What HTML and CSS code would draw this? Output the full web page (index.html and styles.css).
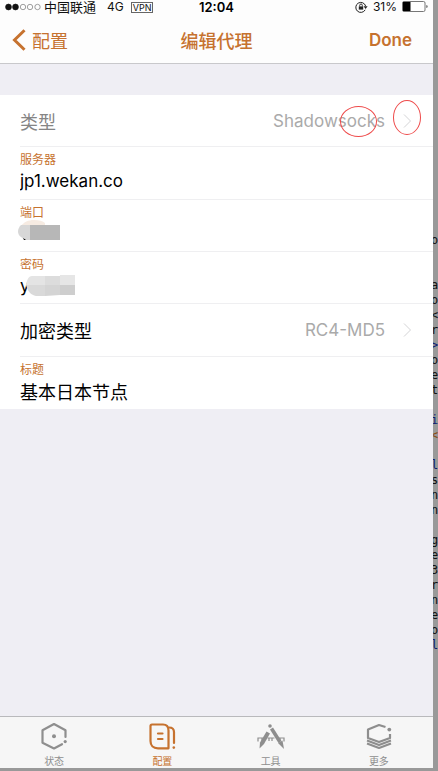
FILE: index.html
```
<!DOCTYPE html>
<html lang="zh-CN">
<head>
<meta charset="utf-8">
<meta name="viewport" content="width=device-width, initial-scale=1">
<title>编辑代理</title>
<link rel="stylesheet" href="styles.css">
</head>
<body>
<main class="phone">
  <div class="status">
    <div class="status-left">
      <svg class="signal" width="36" height="8" viewBox="0 0 36 8"><g stroke="#111" stroke-width=".7"><circle cx="3.5" cy="4" r="2.9" fill="#111"/><circle cx="10.5" cy="4" r="2.9" fill="#111"/><g fill="none" stroke="#777"><circle cx="18" cy="4" r="2.7"/><circle cx="25" cy="4" r="2.7"/><circle cx="32.5" cy="4" r="2.7"/></g></g></svg>
      <span>中国联通</span>
      <span class="network">4G</span>
      <span class="vpn">VPN</span>
    </div>
    <strong class="time">12:04</strong>
    <div class="status-right">
      <svg width="13" height="12" viewBox="0 0 13 12" fill="none" stroke="#222"><path d="M10.2 8.800A5 5 0 1 1 10.600 5"/><path d="M8.600 5.200h4L10.600 8z" fill="#222" stroke="none"/><path d="M3.800 5.400h4.400v3.200H3.800z" fill="#222" stroke="none"/><path d="M4.700 5.500V4.300a1.300 1.300 0 0 1 2.600 0v1.200" stroke-width=".9"/></svg>
      <span>31%</span>
      <svg width="26" height="12" viewBox="0 0 26 12"><rect x=".5" y=".5" width="22.500" height="10" rx="1.500" fill="#fff" stroke="#777"/><path d="M1 1h7.500v9H1z"/><path d="M24.500 4c1.300.5 1.300 2.500 0 3z" fill="#222"/></svg>
    </div>
  </div>

  <header class="nav">
    <a class="back" href="#list"><svg width="14" height="22" viewBox="0 0 14 22" fill="none" stroke="currentColor" stroke-width="3"><path d="M12.500 1.200 2.500 11l10 9.800"/></svg>配置</a>
    <h1>编辑代理</h1>
    <button class="done" type="submit" form="proxy">Done</button>
  </header>

  <form class="list" id="proxy">
    <button class="row pick muted" type="button">
      <span>类型</span>
      <span class="value">Shadowsocks</span>
      <svg class="chevron" width="9" height="16" viewBox="0 0 9 16"><path d="m1 1.500 6.500 6.500L1 14.500"/></svg>
      <i class="ring ring-text"></i>
      <i class="ring ring-arrow"></i>
    </button>
    <div class="row field">
      <label for="server">服务器</label>
      <input id="server" type="text" value="jp1.wekan.co">
    </div>
    <div class="row field">
      <label for="port">端口</label>
      <input id="port" type="text" value="">
      <svg class="mask mask-port" width="43" height="21" viewBox="0 0 43 21"><path d="M3 6C6 2 10 0 16 0c5 0 9 1 11 3v3z" fill="#f6ebe2"/><path d="M12 5h30v15H12z" fill="#b7b7b7"/><path d="M12 5H3C-1 9-1 14 3 17l4 3h5z" fill="#d7d7d7"/><path d="m5 18 3 2H6z"/></svg>
    </div>
    <div class="row field">
      <label for="password">密码</label>
      <input id="password" type="text" value="y">
      <svg class="mask mask-password" width="50" height="21" viewBox="0 0 50 21"><path d="M0 10C1 4 3 1 6 1h13v9z" fill="#e4e4e4"/><path d="M19 1h15v9H19z" fill="#dcdcdc"/><path d="M34 0h15v10H34z" fill="#e6e6e6"/><path d="M0 10h19v11h-9C5 20 2 17 0 10z" fill="#d9d9d9"/><path d="M19 10h15v10l-15 1z" fill="#d4d4d4"/><path d="M34 10h15v10H34z" fill="#cecece"/></svg>
    </div>
    <button class="row pick" type="button">
      <span>加密类型</span>
      <span class="value">RC4-MD5</span>
      <svg class="chevron" width="9" height="16" viewBox="0 0 9 16"><path d="m1 1.500 6.500 6.500L1 14.500"/></svg>
    </button>
    <div class="row field">
      <label for="title">标题</label>
      <input id="title" type="text" value="基本日本节点">
    </div>
  </form>

  <nav class="tabs">
    <a href="#status"><svg width="28" height="28" viewBox="0 0 28 28" fill="none" stroke="currentColor" stroke-width="2.200" stroke-linecap="round" stroke-linejoin="round"><path d="M25.500 15V8.300L14 2 2.500 8.300v12.400L14 26.500l8-4.300"/><circle cx="14" cy="14.300" r="2" fill="currentColor" stroke="none"/><circle cx="25.200" cy="19.600" r="1.600" fill="currentColor" stroke="none"/></svg>状态</a>
    <a class="active" href="#config"><svg width="28" height="28" viewBox="0 0 28 28" fill="none" stroke="currentColor" stroke-width="2.200" stroke-linecap="round" stroke-linejoin="round"><path d="M4 2.500h11c4 0 5.500 2 5.500 6v17.800H10c-5 0-7.500-2.800-7.500-7.300V4c0-1 .5-1.500 1.500-1.500z"/><path d="M21 5.500c3.500 0 5 1.500 5 4.500v11M10 11.500h4.500M10 17h4.500"/><circle cx="25.800" cy="25.600" r="1.300" fill="currentColor" stroke="none"/></svg>配置</a>
    <a href="#tools"><svg width="28" height="28" viewBox="0 0 28 28" fill="none" stroke="currentColor"><path d="M1 19.500v-3.500h5.500m4 0h7m4.500 0h5v3.500M5 16v3m7-3v3m3-3v3m8-3v3" stroke-width="1.200"/><path d="m9.500 9.500 3.500 2L7 22l-4.500 4.500L3 20.500z" fill="currentColor" stroke="none"/><path d="m14.500 6.500 8.500 13.500" stroke-width="3.600"/><circle cx="13" cy="4" r="1.800" fill="currentColor" stroke="none"/><path d="m21 21 4.500-2.500 1.500 8.500z" fill="currentColor" stroke="none"/></svg>工具</a>
    <a href="#more"><svg width="28" height="28" viewBox="0 0 28 28" fill="none" stroke="currentColor" stroke-width="2.200" stroke-linejoin="round"><path d="M20.500 5 14 3 3 7.500v8.500l11 4 11-4V12"/><path d="m2 18.500 12 4.500 12-4.500M2 21.500 14 26l12-4.500" stroke-width="2"/><circle cx="24.300" cy="7.600" r="1.900" fill="currentColor" stroke="none"/></svg>更多</a>
  </nav>
</main>
<aside class="code"><pre>















o


a
o
&lt;
r
<b>&gt;</b>
o
e
t

<b>i</b>
<em>&lt;</em>

<b>l</b>
s
n
n

g
e
3
r
n
e
o
<b>l</b></pre></aside>
</body>
</html>
```
FILE: styles.css
```
* {
  box-sizing: border-box;
}

body {
  margin: 0;
  min-height: 100vh;
  display: grid;
  grid-template-columns: minmax(0, 1fr) 5px;
  padding-bottom: 3px;
  background: #999;
  color: #000;
  font-family: Inter, "Noto Sans CJK SC", sans-serif;
  font-size: 18px;
}

button,
input {
  font: inherit;
  color: inherit;
  border: 0;
  padding: 0;
  background: none;
}

a {
  color: inherit;
  text-decoration: none;
}

svg {
  display: block;
  flex: none;
}

.phone {
  display: flex;
  flex-direction: column;
  background: #efeef4;
}

.status {
  display: grid;
  grid-template-columns: 1fr auto 1fr;
  align-items: center;
  height: 14px;
  padding: 0 5px;
  background: #fdfdfd;
  font-size: 12px;
  line-height: 14px;
}

.status-left,
.status-right {
  display: flex;
  align-items: center;
  gap: 3px;
  color: #111;
}

.status-right {
  justify-content: flex-end;
  gap: 5px;
}

.status-left {
  font-size: 13px;
}

.network {
  margin: 0 4px 0 8px;
  font-size: 12px;
}

.vpn {
  padding: 0 1px;
  border: 1px solid #666;
  font-size: 9px;
  line-height: 9px;
}

.time {
  font-size: 13px;
  font-weight: 600;
}

.nav {
  display: grid;
  grid-template-columns: 1fr auto 1fr;
  align-items: center;
  height: 50px;
  padding: 2px 12px 0;
  border-bottom: 1px solid #c8c8cb;
  background: #fdfdfd;
  color: #c6722f;
}

.nav h1 {
  margin: 0;
  font-size: 18px;
  font-weight: 500;
}

.back {
  display: flex;
  align-items: center;
  gap: 6px;
}

.done {
  justify-self: end;
  margin-right: 9px;
  font-size: 17px;
  font-weight: 600;
}

.list {
  display: grid;
  grid-auto-rows: 1fr;
  min-height: 314px;
  margin: 31px 0 0;
  padding-left: 20px;
  background: #fff;
}

.row {
  position: relative;
  border-bottom: 1px solid #efeff1;
}

.row:last-child {
  border-bottom: 0;
}

.pick {
  display: flex;
  align-items: center;
  gap: 18px;
  padding-right: 21px;
  text-align: left;
}

.muted {
  color: #858585;
}

.value {
  margin-left: auto;
  color: #aaa;
  font-size: 17px;
}

.chevron {
  fill: none;
  stroke: #d4d4d6;
}

.field {
  display: flex;
  flex-direction: column;
  padding-top: 5px;
}

.field label {
  color: #c6722f;
  font-size: 12px;
  line-height: 16px;
}

.field input {
  width: 100%;
  height: 26px;
  outline: 0;
}

#server,
#password {
  font-size: 17px;
}

.ring {
  position: absolute;
  border: 1px solid #ee4a4a;
  border-radius: 50%;
}

.ring-text {
  top: 11px;
  right: 56px;
  width: 37px;
  height: 31px;
}

.ring-arrow {
  top: 5px;
  right: 12px;
  width: 28px;
  height: 35px;
}

.mask {
  position: absolute;
}

.mask-port {
  top: 20px;
  left: -2px;
}

.mask-password {
  top: 23px;
  left: 6px;
}

.tabs {
  display: grid;
  grid-template-columns: repeat(4, 1fr);
  height: 52px;
  margin-top: auto;
  border-top: 1px solid #b9b9bc;
  background: #f6f6f6;
  color: #8e8e8e;
  font-size: 10px;
  line-height: 14px;
}

.tabs a {
  display: flex;
  flex-direction: column;
  align-items: center;
  gap: 4px;
  padding-top: 5px;
}

.tabs .active {
  color: #c6722f;
}

.code {
  overflow: hidden;
  padding-top: 8px;
}

.code pre {
  margin: 0 0 0 -2px;
  color: #111;
  font: 12px/15px "DejaVu Sans Mono", monospace;
}

.code b {
  color: #0c1c70;
  font-weight: 400;
}

.code em {
  color: #8a4a10;
  font-style: normal;
}
```
